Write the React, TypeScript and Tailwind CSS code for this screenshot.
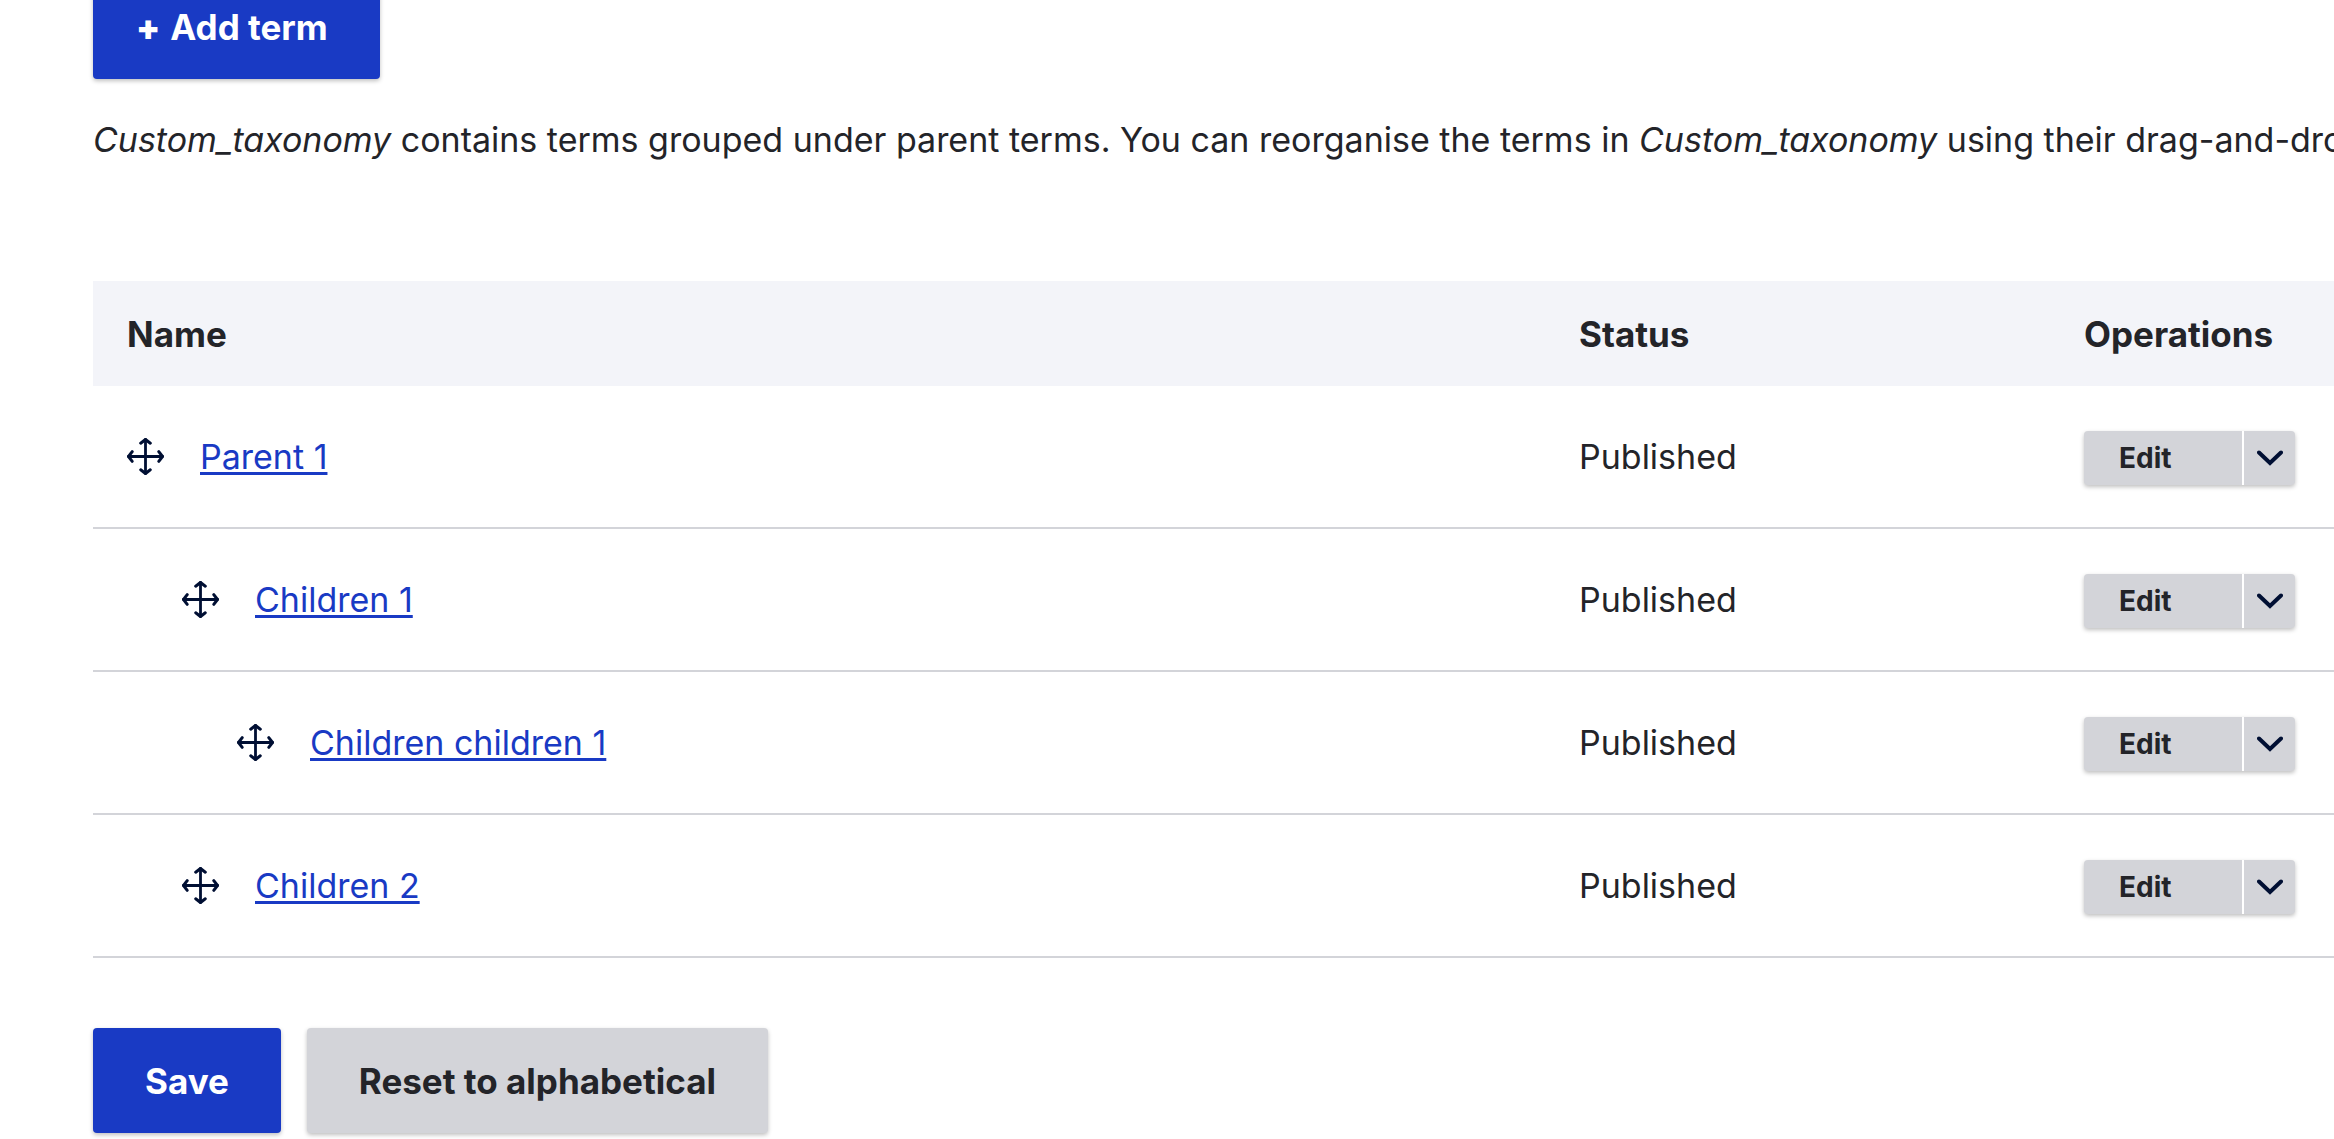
import React from "react";

type Term = { name: string; depth: 0 | 1 | 2 };

const terms: Term[] = [
  { name: "Parent 1", depth: 0 },
  { name: "Children 1", depth: 1 },
  { name: "Children children 1", depth: 2 },
  { name: "Children 2", depth: 1 },
];

const indents = ["pl-[34px]", "pl-[89px]", "pl-[144px]"];

const shadow = "shadow-[0_2px_4px_rgba(0,0,0,0.25)]";

function DragIcon() {
  return (
    <svg
      viewBox="0 0 37 37"
      className="size-[37px]"
      fill="none"
      stroke="#000f33"
      strokeWidth="2.8"
      strokeLinecap="round"
      strokeLinejoin="round"
      aria-hidden="true"
    >
      <path d="M18.5 1.5v34M1.5 18.5h34" />
      <path
        strokeWidth="3"
        d="M13.7 5.2l4.8-3.7 4.8 3.7M13.7 31.8l4.8 3.7 4.8-3.7M5.2 13.7l-3.7 4.8 3.7 4.8M31.8 13.7l3.7 4.8-3.7 4.8"
      />
    </svg>
  );
}

function Operations({ name }: { name: string }) {
  return (
    <div className={`flex h-[54px] w-[211px] rounded-[4px] bg-[#d3d4d9] ${shadow}`}>
      <button type="button" aria-label={`Edit ${name}`} className="grow pl-[35px] text-left text-[28px] leading-8 font-bold">
        Edit
      </button>
      <button
        type="button"
        aria-label={`More actions for ${name}`}
        className="flex w-[53px] items-center justify-center border-l-2 border-white"
      >
        <svg
          viewBox="0 0 26 16"
          className="h-4 w-[26px]"
          fill="none"
          stroke="#000f33"
          strokeWidth="4"
          strokeLinecap="round"
          aria-hidden="true"
        >
          <path d="M2 2.5L13 13 24 2.5" />
        </svg>
      </button>
    </div>
  );
}

export default function App() {
  return (
    <main className="overflow-hidden bg-white pb-1.5 pl-[93px] font-['Inter',sans-serif] text-[34px] leading-[54px] text-[#232429]">
      <a
        href="#add"
        className={`-mt-[26px] flex h-[105px] w-fit items-center gap-2.5 rounded-[4px] bg-[#193ac4] pr-[52px] pl-[43px] text-[35px] font-bold text-white ${shadow}`}
      >
        <span className="font-black">+</span>
        <span>Add term</span>
      </a>

      <p className="mt-[34px] whitespace-nowrap">
        <em className="[font-style:oblique_10deg]">Custom_taxonomy</em> contains terms grouped under parent terms. You can
        reorganise the terms in <em className="[font-style:oblique_10deg]">Custom_taxonomy</em> using their drag-and-drop
      </p>

      <table className="mt-[114px] w-full table-fixed border-separate border-spacing-0 text-left">
        <thead>
          <tr className="h-[105px] bg-[#f3f4f9] text-[35px]">
            <th className="pl-[34px] font-bold">Name</th>
            <th className="w-[505px] pl-8 font-bold">Status</th>
            <th className="w-[282px] pl-8 font-bold">Operations</th>
          </tr>
        </thead>
        <tbody>
          {terms.map((term) => (
            <tr key={term.name} className="h-[143px]">
              <td className={`border-b-2 border-[#d3d4d9] ${indents[term.depth]}`}>
                <div className="flex items-center gap-9">
                  <button type="button" aria-label={`Drag to re-order ${term.name}`}>
                    <DragIcon />
                  </button>
                  <a href="#term" className="text-[#193ac4] underline decoration-[3px] underline-offset-[3px]">
                    {term.name}
                  </a>
                </div>
              </td>
              <td className="border-b-2 border-[#d3d4d9] pl-8">Published</td>
              <td className="border-b-2 border-[#d3d4d9] pt-[3px] pl-8">
                <Operations name={term.name} />
              </td>
            </tr>
          ))}
        </tbody>
      </table>

      <div className="mt-[70px] flex gap-[26px] text-[35px] font-bold">
        <button type="button" className={`h-[105px] rounded-[4px] bg-[#193ac4] px-[52px] text-white ${shadow}`}>
          Save
        </button>
        <button type="button" className={`h-[105px] rounded-[4px] bg-[#d3d4d9] px-[52px] ${shadow}`}>
          Reset to alphabetical
        </button>
      </div>
    </main>
  );
}
